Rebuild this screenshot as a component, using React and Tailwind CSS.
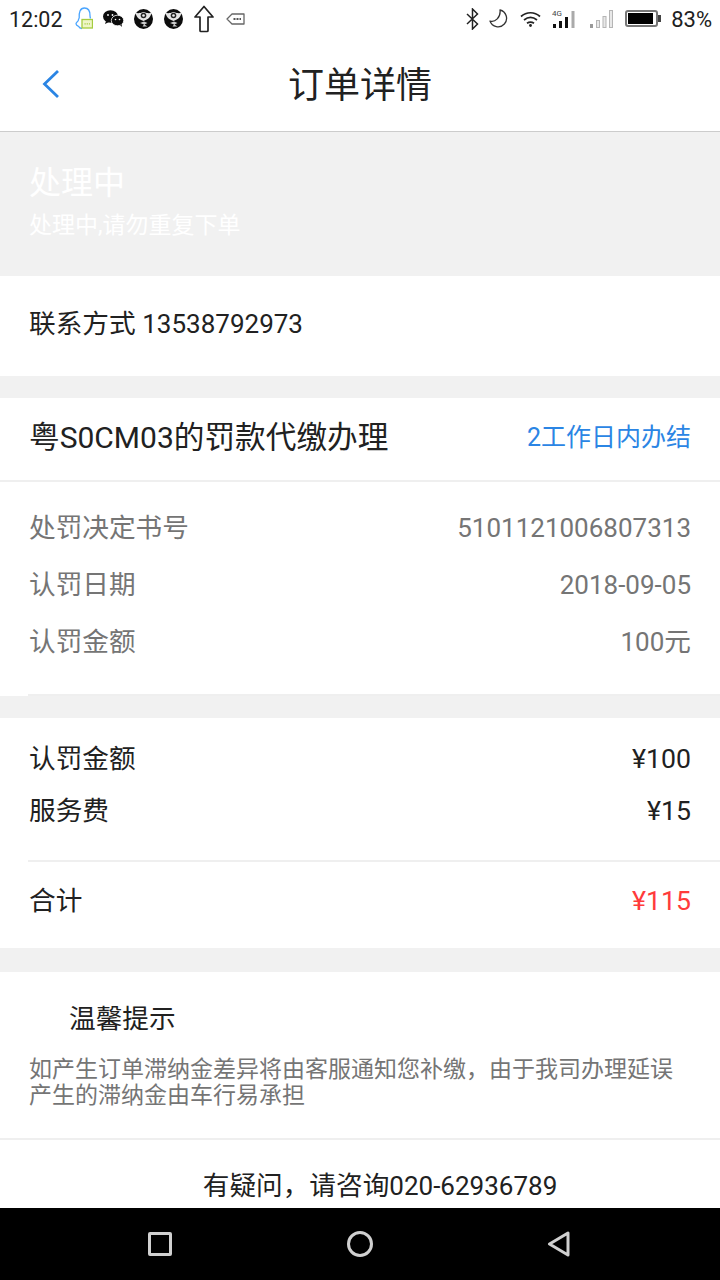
import React from 'react';

const font = 'font-["Roboto","Noto_Sans_CJK_SC",sans-serif]';

function DetailRow({ label, value, unit }) {
  return (
    <div className="flex justify-between items-center h-[57px] text-[26.67px] text-[#757575]">
      <span>{label}</span>
      <span><span className="text-[26px]">{value}</span>{unit}</span>
    </div>
  );
}

function PriceRow({ label, value }) {
  return (
    <div className="flex justify-between items-center h-[52px] text-[26.67px] text-[#212121]">
      <span>{label}</span>
      <span>{value}</span>
    </div>
  );
}

function PoliceBadge({ className }) {
  return (
    <svg viewBox="0 0 19 20" className={className}>
      <ellipse cx="9.500" cy="10" rx="9.500" ry="10" fill="#0c0c0c" />
      <path d="M1.500 3.500c2 1 3.500 1 8-.5 4.500 1.500 6 1.500 8 .5-.5 4-3 7-8 8.500-5-1.500-7.500-4.500-8-8.500z" fill="#e4e4e4" />
      <circle cx="9.500" cy="6.500" r="2.800" fill="#222" />
      <circle cx="9.500" cy="6.500" r="1.300" fill="#eee" />
      <path d="M6 14l4-1.500 3.500 1.500-3 1.500 3 2H8.500l1.500-2z" fill="#cfcfcf" />
    </svg>
  );
}

function StatusBar() {
  return (
    <div className="h-[40px] shrink-0 flex items-center justify-between pl-[9px] pr-[8px] pb-[3px] bg-white">
      <div className="flex items-center">
        <span className="text-[21.500px] leading-[26px] mt-[2px] text-[#212121] w-[52px] whitespace-nowrap">12:02</span>
        <svg viewBox="0 0 18 23" className="w-[18px] h-[23px] ml-[14px]" fill="none">
          <path d="M7 21.500c-1.800 0-3-1-3.500-2.200C2.200 18.800 1 17.800 1 16.800c0-1 1.500-2 2.300-3.300.2-.8.200-1.500.9-2.500C3.800 5.500 5 1 9.500 1c3.800 0 5.500 3.500 5.500 7.500 0 1 .2 2 .5 3" stroke="#4aa5ff" strokeWidth="1.300" strokeLinejoin="round" />
          <rect x="7" y="12.500" width="10.500" height="8.500" fill="#eef5c8" stroke="#a5cc40" strokeWidth="1.300" />
          <path d="M9.500 16.800h5.500" stroke="#a5cc40" strokeWidth="1.300" strokeDasharray="1.200 1" />
        </svg>
        <svg viewBox="0 0 21 17" className="w-[21px] h-[17px] ml-[10px]">
          <ellipse cx="7.500" cy="6.500" rx="7.500" ry="6.200" fill="#0c0c0c" />
          <path d="M3 11l-1 3 4-2z" fill="#0c0c0c" />
          <ellipse cx="14.500" cy="10.500" rx="6.200" ry="5.300" fill="#0c0c0c" stroke="#fff" strokeWidth="0.800" />
          <path d="M17 15l2 2-.5-3z" fill="#0c0c0c" />
          <circle cx="5" cy="5" r="0.900" fill="#fff" />
          <circle cx="9.500" cy="5" r="0.900" fill="#fff" />
          <circle cx="12.500" cy="9.500" r="0.800" fill="#fff" />
          <circle cx="16.500" cy="9.500" r="0.800" fill="#fff" />
        </svg>
        <PoliceBadge className="w-[19px] h-[20px] ml-[10px]" />
        <PoliceBadge className="w-[19px] h-[20px] ml-[11px]" />
        <svg viewBox="0 0 20 28" className="w-[20px] h-[28px] ml-[11px]" fill="none">
          <path d="M10 1.500L1 12h5v13.500c0 .6.400 1 1 1h6c.6 0 1-.4 1-1V12h5z" stroke="#222" strokeWidth="1.700" strokeLinejoin="round" />
        </svg>
        <svg viewBox="0 0 19 12" className="w-[19px] h-[12px] ml-[12px]" fill="none">
          <path d="M1 6l5-5h12v10H6z" stroke="#666" strokeWidth="1.300" strokeLinejoin="round" />
          <path d="M7.500 6h7.500" stroke="#555" strokeWidth="2" strokeDasharray="2 1" />
        </svg>
      </div>
      <div className="flex items-center">
        <svg viewBox="0 0 13 22" className="w-[13px] h-[22px]" fill="none">
          <path d="M1 6l10.500 10L6.500 21V1l5 5L1 16" stroke="#222" strokeWidth="1.500" />
        </svg>
        <svg viewBox="0 0 19 19" className="w-[19px] h-[19px] ml-[10px]" fill="none">
          <path d="M11 1a8.500 8.500 0 1 1-10 11c5 1.500 11-3.500 10-11z" stroke="#333" strokeWidth="1.300" strokeLinejoin="round" />
        </svg>
        <svg viewBox="0 0 21 16" className="w-[21px] h-[16px] ml-[12px]" fill="none">
          <path d="M1 5.500c5.500-5 13.500-5 19 0M4 9c4-3.200 9-3.200 13 0M7 12.300c2.200-1.600 4.800-1.600 7 0" stroke="#222" strokeWidth="1.700" />
          <circle cx="10.500" cy="14.500" r="1.400" fill="#222" />
        </svg>
        <svg viewBox="0 0 23 18" className="w-[23px] h-[18px] ml-[11px]">
          <text x="0" y="6" fontSize="8" fontFamily="Roboto" fill="#444">4G</text>
          <rect x="1" y="14" width="3" height="4" fill="#111" />
          <rect x="7" y="11" width="3" height="7" fill="#111" />
          <rect x="13" y="7" width="3" height="11" fill="#111" />
          <rect x="19.500" y="1" width="3" height="17" fill="#aaa" />
        </svg>
        <svg viewBox="0 0 24 18" className="w-[24px] h-[18px] ml-[14px]">
          <rect x="1" y="14" width="3" height="4" fill="#999" />
          <rect x="7.500" y="10.500" width="3" height="7" fill="#e8e8e8" stroke="#b5b5b5" />
          <rect x="14" y="6.500" width="3" height="11" fill="#e8e8e8" stroke="#b5b5b5" />
          <rect x="20.500" y="0.500" width="3" height="17" fill="#e8e8e8" stroke="#b5b5b5" />
        </svg>
        <div className="flex items-center ml-[12px]">
          <div className="w-[33px] h-[17px] border-2 border-[#777] rounded-[3px] p-[1px] bg-white">
            <div className="w-[25px] h-full bg-black" />
          </div>
          <div className="w-[3px] h-[7px] bg-[#444]" />
        </div>
        <span className="text-[22px] leading-[26px] mt-[2px] text-[#212121] ml-[10px]">83%</span>
      </div>
    </div>
  );
}

export default function App() {
  return (
    <div className={`${font} w-[720px] h-[1280px] flex flex-col overflow-hidden bg-white`}>
      <StatusBar />

      <div className="h-[92px] shrink-0 relative flex items-center justify-center border-b border-[#cccccc] bg-white">
        <svg viewBox="0 0 18 30" className="absolute left-[42px] top-[29px] w-[18px] h-[30px]" fill="none">
          <path d="M16 2L2.500 15 16 28" stroke="#2b85e4" strokeWidth="2.800" />
        </svg>
        <span className="text-[36px] text-[#212121]">订单详情</span>
      </div>

      <div className="flex-1 min-h-0 overflow-hidden bg-[#f1f1f1]">
        <div className="h-[144px] pl-[29px] pt-[31px] text-white">
          <div className="text-[32px] leading-[40px]">处理中</div>
          <div className="text-[23px] leading-[32px] mt-[7px]">处理中,请勿重复下单</div>
        </div>

        <div className="h-[100px] bg-white flex items-center pl-[29px] pb-[4px] text-[26.67px] text-[#212121]">
          <span>联系方式 <span className="text-[26px]">13538792973</span></span>
        </div>

        <div className="mt-[22px] bg-white h-[298px] flex flex-col">
          <div className="h-[84px] shrink-0 flex justify-between items-center pl-[29px] pr-[29px] pb-[2px] border-b-2 border-[#efefef]">
            <span className="text-[30.67px] text-[#212121]">粤<span className="text-[30px]">S0CM03</span>的罚款代缴办理</span>
            <span className="text-[25px] text-[#2b85e4]">2工作日内办结</span>
          </div>
          <div className="flex-1 pl-[29px] pr-[29px] pt-[17px]">
            <DetailRow label="处罚决定书号" value="5101121006807313" />
            <DetailRow label="认罚日期" value="2018-09-05" />
            <DetailRow label="认罚金额" value="100" unit="元" />
          </div>
          <div className="h-[2px] ml-[28px] bg-[#efefef]" />
        </div>

        <div className="mt-[22px] bg-white h-[230px]">
          <div className="pl-[29px] pr-[29px] pt-[15px] h-[142px]">
            <PriceRow label="认罚金额" value="¥100" />
            <PriceRow label="服务费" value="¥15" />
          </div>
          <div className="h-[2px] ml-[28px] bg-[#efefef]" />
          <div className="flex justify-between items-center pl-[29px] pr-[29px] pb-[2px] h-[79px] text-[26.67px]">
            <span className="text-[#212121]">合计</span>
            <span className="text-[#ff3b3b]">¥115</span>
          </div>
        </div>

        <div className="mt-[24px] bg-white h-[236px]">
          <div className="h-[168px] pl-[29px] pr-[40px] border-b-2 border-[#efefef]">
            <div className="pl-[40px] pt-[29px] text-[26.67px] leading-[36px] text-[#212121]">温馨提示</div>
            <div className="mt-[20px] text-[23px] leading-[26px] text-[#757575]">
              如产生订单滞纳金差异将由客服通知您补缴，由于我司办理延误产生的滞纳金由车行易承担
            </div>
          </div>
          <div className="pt-[28px] text-center pl-[40px] text-[26.67px] leading-[36px] text-[#212121]">
            有疑问，请咨询<span className="text-[26px]">020-62936789</span>
          </div>
        </div>
      </div>

      <div className="h-[72px] shrink-0 bg-black flex items-center justify-center pr-[2px]">
        <div className="w-[422px] flex items-center justify-between">
          <div className="w-[24px] h-[24px] border-[3px] border-[#d0d0d0] rounded-[2px]" />
          <div className="w-[26px] h-[26px] border-[3px] border-[#d0d0d0] rounded-full" />
          <svg viewBox="0 0 23 26" className="w-[23px] h-[26px]" fill="none">
            <path d="M21 2v22L2.500 13z" stroke="#d0d0d0" strokeWidth="3" strokeLinejoin="round" />
          </svg>
        </div>
      </div>
    </div>
  );
}
